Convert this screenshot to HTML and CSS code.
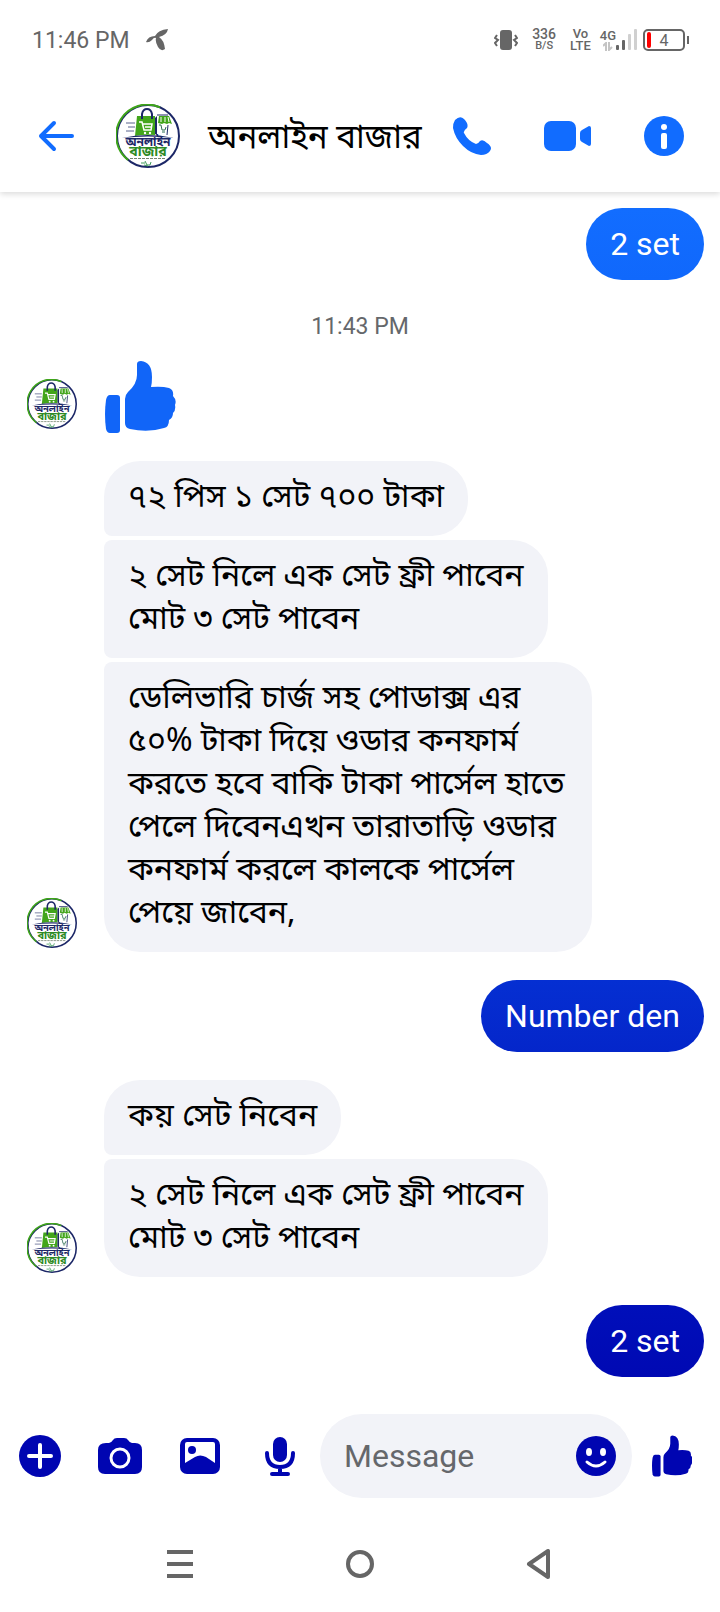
FILE: index.html
```
<!DOCTYPE html>
<html lang="bn">
<head>
    <meta charset="UTF-8">
    <meta name="viewport" content="width=device-width, initial-scale=1.0">
    <title>অনলাইন বাজার</title>
    <link rel="stylesheet" href="styles.css">
</head>
<body>
    <!-- shared shapes -->
    <svg class="symbols" aria-hidden="true">
        <symbol id="thumb" viewBox="0 0 70 72">
            <path d="M5 34h7q3 0 3 3v32q0 3-3 3H5q-3 0-4-4-2-15 0-29 1-5 4-5z"/>
            <path d="M32 3q0-3 4-3 11 1 11 16 0 6-1 10 11-1 18 1 5 2 4 8 4 4 2 9 1 5-2 8 0 5-4 7 0 7-5 8-16 5-34 1-5-1-5-6V38q0-4 3-7 9-8 9-17z"/>
        </symbol>
        <symbol id="logo" viewBox="0 0 64 64">
            <circle cx="32" cy="32" r="31" fill="#fff" stroke="#1c2767" stroke-width="2"/>
            <path d="M44 3.400A31 31 0 0 0 12 56" fill="none" stroke="#3fa51a" stroke-width="2"/>
            <path d="M10 19h9M12 23h7M10 27h8" stroke="#59628c"/>
            <path d="M21 12h18v19q-9-1-20 1z" fill="#42a51b"/>
            <path d="M26 15V10q1-5 5-5t5 5v5" fill="none" stroke="#1c2767" stroke-width="2"/>
            <path d="M39 14l2-2v19l-2-1z" fill="#1c2767"/>
            <path d="M43 12h10l3 8-3-1-2 1-3-1-2 1-4-1z" fill="#42a51b"/>
            <path d="M45 13v5M49 13v5M52 13l1 5" stroke="#fff"/>
            <path d="M52 21l-1 10M41 11h11" fill="none" stroke="#1c2767"/>
            <path d="M23 18h3l2 8h7l1-6H27M29 23h7" fill="none" stroke="#fff" stroke-width="1.500"/>
            <circle cx="29" cy="29" r="1.200" fill="#fff"/>
            <circle cx="34" cy="29" r="1.200" fill="#fff"/>
            <path d="M43 21h2l1 5h3l1-3M46 28h3" fill="none" stroke="#2f6f55"/>
            <path d="M6 34q26-6 52 0-26-3-52 0z" fill="#1c2767"/>
            <path d="M14 54.500h36" stroke="#74836f" stroke-dasharray="3 1"/>
            <path d="M25 59h4M29 57l2 4h3l1-3M28 61l4 1" fill="none" stroke="#3f9a5a"/>
        </symbol>
    </svg>

    <div class="status-bar">
        <span class="clock">11:46 PM</span>
        <svg class="carrier" viewBox="0 0 22 22" width="22" height="22">
            <path d="M9 7q3-6 13-7-1 6-9 8 5 3 6 12-4 3-7-2-3-5-2-9-2-1-4 2-3 3-6 2Q2 7 9 7z"/>
        </svg>
        <div class="status-right">
            <svg class="vibrate" viewBox="0 0 24 20" width="24" height="20">
                <rect x="6" y="0" width="12" height="20" rx="3"/>
                <path d="M3 5l-2 3 3 2-3 3 2 3M21 5l2 3-3 2 3 3-2 3" fill="none" stroke="#666" stroke-width="2"/>
            </svg>
            <div class="stat speed"><span>336</span><small>B/S</small></div>
            <div class="stat"><span>Vo</span><span>LTE</span></div>
            <div class="signal">
                <div class="stat"><span>4G</span>
                    <svg viewBox="0 0 10 9" width="10" height="9"><path d="M0 4l3-3v8M6 0v8l3-3" fill="none" stroke="#c4c4c4" stroke-width="2"/></svg>
                </div>
                <svg viewBox="0 0 21 22" width="21" height="22">
                    <g fill="#666"><rect y="16" width="3" height="5" rx="1"/><rect x="6" y="11" width="3" height="10" rx="1"/></g>
                    <g fill="#d0d0d0"><rect x="12" y="5" width="3" height="16" rx="1"/><rect x="18" y="0" width="3" height="21" rx="1"/></g>
                </svg>
            </div>
            <div class="battery"><span>4</span></div>
        </div>
    </div>

    <header class="chat-header">
        <button class="icon-btn back" aria-label="Back">
            <svg viewBox="0 0 36 32" width="36" height="32"><path d="M34 16H3M16 3L3 16l13 13" fill="none" stroke="currentColor" stroke-width="4" stroke-linecap="round" stroke-linejoin="round"/></svg>
        </button>
        <svg class="avatar avatar-large" viewBox="0 0 64 64">
            <use href="#logo"/>
            <text class="logo-name" x="32" y="42">অনলাইন</text>
            <text class="logo-name green" x="32" y="52">বাজার</text>
        </svg>
        <h1>অনলাইন বাজার</h1>
        <div class="actions">
            <button class="icon-btn" aria-label="Call">
                <svg viewBox="0 0 38 38" width="38" height="38"><path d="M2 3q5-5 9-1 5 5 3 9-4 3-3 5 4 8 12 11 2 0 4-3 3-2 7 2 6 4 3 8-3 4-9 4-10-1-18-9T0 11Q0 6 2 3z"/></svg>
            </button>
            <button class="icon-btn" aria-label="Video call">
                <svg viewBox="0 0 47 30" width="47" height="30"><rect width="32" height="30" rx="7"/><path d="M36 12q0-2 2-3l7-4q2 0 2 2v16q0 2-2 2l-7-4q-2-1-2-3z"/></svg>
            </button>
            <button class="icon-btn" aria-label="Information">
                <svg viewBox="0 0 40 40" width="40" height="40"><circle cx="20" cy="20" r="20"/><circle cx="20" cy="11" r="3" fill="#fff"/><rect x="17" y="17" width="6" height="16" rx="2" fill="#fff"/></svg>
            </button>
        </div>
    </header>

    <main class="chat">
        <p class="bubble sent first">2 set</p>
        <time>11:43 PM</time>
        <div class="group">
            <svg class="avatar" viewBox="0 0 64 64">
                <use href="#logo"/>
                <text class="logo-name" x="32" y="42">অনলাইন</text>
                <text class="logo-name green" x="32" y="52">বাজার</text>
            </svg>
            <svg class="big-thumb"><use href="#thumb"/></svg>
        </div>
        <div class="group">
            <svg class="avatar" viewBox="0 0 64 64">
                <use href="#logo"/>
                <text class="logo-name" x="32" y="42">অনলাইন</text>
                <text class="logo-name green" x="32" y="52">বাজার</text>
            </svg>
            <div class="bubbles">
                <p class="bubble received">৭২ পিস ১ সেট ৭০০ টাকা</p>
                <p class="bubble received">২ সেট নিলে এক সেট ফ্রী পাবেন<br>মোট ৩ সেট পাবেন</p>
                <p class="bubble received">ডেলিভারি চার্জ সহ পোডাক্স এর ৫০% টাকা দিয়ে ওডার কনফার্ম করতে হবে বাকি টাকা পার্সেল হাতে পেলে দিবেনএখন তারাতাড়ি ওডার কনফার্ম করলে কালকে পার্সেল পেয়ে জাবেন,</p>
            </div>
        </div>
        <p class="bubble sent middle">Number den</p>
        <div class="group">
            <svg class="avatar" viewBox="0 0 64 64">
                <use href="#logo"/>
                <text class="logo-name" x="32" y="42">অনলাইন</text>
                <text class="logo-name green" x="32" y="52">বাজার</text>
            </svg>
            <div class="bubbles">
                <p class="bubble received">কয় সেট নিবেন</p>
                <p class="bubble received">২ সেট নিলে এক সেট ফ্রী পাবেন<br>মোট ৩ সেট পাবেন</p>
            </div>
        </div>
        <p class="bubble sent last">2 set</p>
    </main>

    <form class="composer">
        <button type="button" class="icon-btn" aria-label="More">
            <svg viewBox="0 0 44 44" width="44" height="44"><circle cx="22" cy="22" r="21"/><path d="M22 11v22M11 22h22" stroke="#fff" stroke-width="4" stroke-linecap="round"/></svg>
        </button>
        <button type="button" class="icon-btn" aria-label="Camera">
            <svg viewBox="0 0 44 44" width="44" height="44"><path d="M8 9h3q2 0 4-3 1-2 4-2h7q3 0 4 2 2 3 4 3h3q7 0 7 7v17q0 7-7 7H7q-7 0-7-7V16q0-7 8-7z"/><circle cx="22" cy="24" r="9" fill="none" stroke="#fff" stroke-width="3"/></svg>
        </button>
        <button type="button" class="icon-btn" aria-label="Gallery">
            <svg viewBox="0 0 44 44" width="44" height="44"><rect x="2" y="4" width="40" height="36" rx="7"/><path d="M9 8h26q2 0 2 2v19l-9-6q-6-3-11 0L7 29V10q0-2 2-2z" fill="#fff"/><circle cx="14" cy="16" r="4"/></svg>
        </button>
        <button type="button" class="icon-btn" aria-label="Voice">
            <svg viewBox="0 0 44 44" width="44" height="44"><rect x="15" y="3" width="14" height="25" rx="7"/><path d="M9 19q0 14 13 14t13-14M22 33v7M14 40h16" fill="none" stroke="currentColor" stroke-width="4" stroke-linecap="round"/></svg>
        </button>
        <div class="field">
            <input type="text" placeholder="Message" aria-label="Message">
            <button type="button" class="icon-btn" aria-label="Emoji">
                <svg viewBox="0 0 40 40" width="40" height="40"><circle cx="20" cy="20" r="20"/><g fill="#fff"><ellipse cx="13" cy="16" rx="3" ry="4"/><ellipse cx="27" cy="16" rx="3" ry="4"/></g><path d="M11 26q9 8 18 0" fill="none" stroke="#fff" stroke-width="3" stroke-linecap="round"/></svg>
            </button>
        </div>
        <button type="button" class="icon-btn" aria-label="Like">
            <svg width="40" height="42"><use href="#thumb"/></svg>
        </button>
    </form>

    <nav class="system-nav">
        <button class="icon-btn" aria-label="Recent apps"><svg viewBox="0 0 30 30" width="30" height="30"><path d="M2 3h26M2 15h26M2 27h26" stroke="currentColor" stroke-width="4"/></svg></button>
        <button class="icon-btn" aria-label="Home"><svg viewBox="0 0 30 30" width="30" height="30"><circle cx="15" cy="15" r="12" fill="none" stroke="currentColor" stroke-width="4"/></svg></button>
        <button class="icon-btn" aria-label="Go back"><svg viewBox="0 0 30 30" width="30" height="30"><path d="M23 2v26L4 15z" fill="none" stroke="currentColor" stroke-width="4" stroke-linejoin="round"/></svg></button>
    </nav>
</body>
</html>
```
FILE: styles.css
```
* {
    box-sizing: border-box;
}

body {
    margin: 0;
    min-height: 100vh;
    display: flex;
    flex-direction: column;
    background-color: #fff;
    color: #000;
    font-family: Roboto, "Noto Sans Bengali", "Noto Sans", sans-serif;
}

.symbols {
    position: absolute;
    width: 0;
    height: 0;
}

.icon-btn {
    display: flex;
    align-items: center;
    justify-content: center;
    flex-shrink: 0;
    padding: 0;
    border: none;
    background: none;
    color: inherit;
    cursor: pointer;
}

svg {
    display: block;
    flex-shrink: 0;
    fill: currentColor;
}

/* phone status bar */
.status-bar {
    position: relative;
    z-index: 1;
    display: flex;
    align-items: center;
    height: 80px;
    padding: 0 35px 0 32px;
    background-color: #fff;
    color: #666;
}

.clock {
    font-size: 23px;
}

.carrier {
    margin-left: 16px;
}

.status-right {
    display: flex;
    align-items: center;
    gap: 14px;
    margin-left: auto;
}

.stat {
    display: flex;
    flex-direction: column;
    align-items: center;
    font-size: 13px;
    font-weight: 500;
    line-height: 12px;
}

.stat.speed {
    font-size: 14px;
}

.stat small {
    font-size: 11px;
}

.signal {
    display: flex;
    align-items: center;
    margin-left: -5px;
}

.battery {
    position: relative;
    display: flex;
    align-items: center;
    justify-content: center;
    width: 42px;
    height: 22px;
    margin-left: -8px;
    border: 2px solid #666;
    border-radius: 5px;
    font-size: 16px;
}

.battery::before,
.battery::after {
    content: "";
    position: absolute;
}

.battery::before {
    left: 2px;
    top: 1px;
    width: 4px;
    height: 16px;
    border-radius: 2px;
    background-color: #f00;
}

.battery::after {
    right: -6px;
    top: 5px;
    width: 2px;
    height: 8px;
    background-color: #666;
}

/* conversation header */
.chat-header {
    display: flex;
    align-items: center;
    height: 112px;
    padding: 0 36px 0 38px;
    color: #116cff;
    box-shadow: 0 2px 6px rgba(0, 0, 0, 0.15);
}

.chat-header h1 {
    margin: 0;
    padding-top: 8px;
    color: #000;
    font-family: "Noto Sans Bengali", "Noto Sans", Roboto, sans-serif;
    font-size: 33px;
    font-weight: 400;
    line-height: 44px;
    white-space: nowrap;
}

.actions {
    display: flex;
    gap: 53px;
    margin-left: auto;
}

/* page logo */
.avatar {
    width: 50px;
    height: 50px;
    margin-bottom: 4px;
}

.avatar-large {
    width: 64px;
    height: 64px;
    margin: 0 28px 0 42px;
}

.logo-name {
    fill: #1c2767;
    font-size: 12px;
    font-weight: 700;
    text-anchor: middle;
}

.logo-name.green {
    fill: #2d8a24;
    font-size: 14px;
}

/* messages */
.chat {
    flex: 1;
    display: flex;
    flex-direction: column;
    gap: 28px;
    padding: 16px 16px 28px;
}

.chat time {
    align-self: center;
    margin-bottom: -13px;
    color: #65676b;
    font-size: 23px;
    line-height: 38px;
}

.group {
    display: flex;
    align-items: flex-end;
    gap: 27px;
    padding-left: 11px;
}

.big-thumb {
    width: 72px;
    height: 72px;
    color: #1165f8;
}

.bubbles {
    display: flex;
    flex-direction: column;
    align-items: flex-start;
    gap: 4px;
}

.bubble {
    margin: 0;
    padding: 16px 24px;
    border-radius: 36px;
    font-size: 32px;
    line-height: 43px;
}

.received {
    max-width: 488px;
    padding: 17px 24px 15px;
    border-radius: 8px 36px 36px 8px;
    background-color: #f2f3f8;
    font-family: "Noto Sans Bengali", "Noto Sans", Roboto, sans-serif;
}

.received:first-child {
    border-top-left-radius: 36px;
}

.received:last-child {
    border-bottom-left-radius: 36px;
}

.sent {
    align-self: flex-end;
    line-height: 40px;
    color: #fff;
}

.sent.first {
    background: linear-gradient(#126dff, #1068fc);
}

.sent.middle {
    background: linear-gradient(#052fd2, #0426ca);
}

.sent.last {
    background: linear-gradient(#000fba, #0009b3);
}

/* message box */
.composer {
    display: flex;
    align-items: center;
    gap: 36px;
    padding: 9px 28px 0 18px;
    color: #0005b1;
}

.field {
    flex: 1;
    display: flex;
    align-items: center;
    min-width: 0;
    height: 84px;
    margin: 0 -16px 0 -18px;
    padding: 0 16px 0 24px;
    border-radius: 42px;
    background-color: #f2f3f8;
}

.field input {
    flex: 1;
    min-width: 0;
    padding: 0;
    border: none;
    outline: none;
    background: none;
    font: inherit;
    font-size: 32px;
}

.field input::placeholder {
    color: #65676b;
    opacity: 1;
}

/* system navigation */
.system-nav {
    display: flex;
    justify-content: space-between;
    padding: 51px 165px 33px;
    color: #666;
}
```
